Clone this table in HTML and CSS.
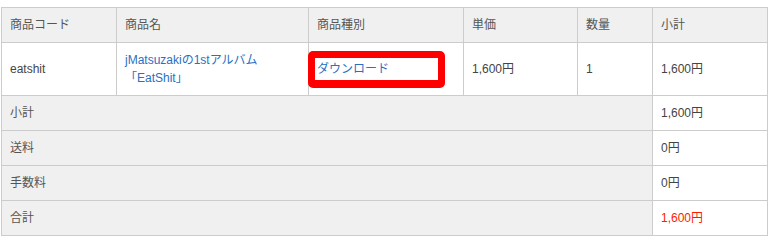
FILE: index.html
```html
<!DOCTYPE html>
<html lang="ja">
<head>
<meta charset="utf-8">
<link rel="stylesheet" href="styles.css">
</head>
<body>
<table class="cart">
  <colgroup>
    <col class="c1"><col class="c2"><col class="c3"><col class="c4"><col class="c5"><col class="c6">
  </colgroup>
  <thead>
    <tr>
      <th>商品コード</th>
      <th>商品名</th>
      <th>商品種別</th>
      <th>単価</th>
      <th>数量</th>
      <th>小計</th>
    </tr>
  </thead>
  <tbody>
    <tr class="item">
      <td>eatshit</td>
      <td><a href="#" class="link">jMatsuzakiの1stアルバム<br>「EatShit」</a></td>
      <td><a href="#" class="link dl">ダウンロード</a></td>
      <td>1,600円</td>
      <td>1</td>
      <td>1,600円</td>
    </tr>
    <tr class="sum">
      <th colspan="5">小計</th>
      <td>1,600円</td>
    </tr>
    <tr class="sum">
      <th colspan="5">送料</th>
      <td>0円</td>
    </tr>
    <tr class="sum">
      <th colspan="5">手数料</th>
      <td>0円</td>
    </tr>
    <tr class="sum">
      <th colspan="5">合計</th>
      <td class="total">1,600円</td>
    </tr>
  </tbody>
</table>
</body>
</html>
```
FILE: styles.css
```css
html, body {
  margin: 0;
  padding: 0;
  background: #fff;
}
body {
  padding: 7px 0 0 1px;
  font-family: "Liberation Sans", "Noto Sans CJK JP", sans-serif;
  font-size: 12px;
  color: #444;
}
.cart {
  border-collapse: collapse;
  table-layout: fixed;
  width: 766px;
}
.c1 { width: 115px; }
.c2 { width: 192px; }
.c3 { width: 155px; }
.c4 { width: 114px; }
.c5 { width: 75px; }
.c6 { width: 115px; }
.cart th,
.cart td {
  border: 1px solid #ccc;
  padding: 8px;
  line-height: 18px;
  text-align: left;
  vertical-align: middle;
  font-weight: normal;
}
.cart th {
  background: #f0f0f0;
  color: #555;
}
.cart td {
  background: #fff;
  color: #444;
}
.link {
  color: #2a6fc2;
  text-decoration: none;
}
.dl {
  position: relative;
  display: inline-block;
}
.dl::after {
  content: "";
  position: absolute;
  left: -9px;
  top: -9px;
  width: 137px;
  height: 37px;
  border: 7px solid #ff0000;
  border-bottom-width: 8px;
  border-radius: 5px;
  box-sizing: border-box;
}
.cart td.total {
  color: #ff1a00;
}
```
